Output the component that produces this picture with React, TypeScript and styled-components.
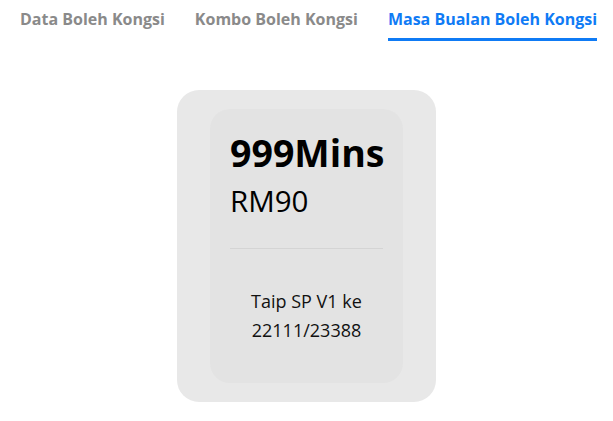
import React from "react";
import styled, { createGlobalStyle } from "styled-components";

const GlobalStyle = createGlobalStyle`
  body {
    margin: 0;
    background: #ffffff;
    font-family: "Open Sans", "Noto Sans", sans-serif;
  }
`;

const Page = styled.div`
  display: flex;
  flex-direction: column;
  align-items: stretch;
  width: 613px;
`;

const TabBar = styled.div`
  display: flex;
  padding-left: 5px;
`;

const Tab = styled.div<{ active?: boolean }>`
  margin: 0 15px;
  padding-top: 9px;
  height: 29px;
  font-size: 16px;
  line-height: 20px;
  font-weight: 700;
  white-space: nowrap;
  color: ${({ active }) => (active ? "#0f7bf5" : "#8a8a8a")};
  border-bottom: 3px solid ${({ active }) => (active ? "#0f7bf5" : "transparent")};
`;

const Content = styled.div`
  display: flex;
  justify-content: center;
  padding-top: 49px;
`;

const Card = styled.div`
  width: 259px;
  box-sizing: border-box;
  padding: 19px 33px;
  background: #e8e8e8;
  border-radius: 22px;
`;

const Inner = styled.div`
  background: #e3e3e3;
  border-radius: 20px;
  padding: 20px 20px 30px;
  height: 274px;
  box-sizing: border-box;
  display: flex;
  flex-direction: column;
`;

const Minutes = styled.div`
  font-size: 37.5px;
  font-weight: 700;
  line-height: 48px;
  color: #000;
`;

const Price = styled.div`
  font-size: 29.5px;
  line-height: 38px;
  margin-top: 5px;
  color: #000;
`;

const Divider = styled.hr`
  border: none;
  border-top: 1px solid #d4d4d4;
  margin: 28px 0 0;
`;

const Note = styled.div`
  margin-top: 38px;
  text-align: center;
  font-size: 18px;
  line-height: 29px;
  color: #111;
`;

const tabs = ["Data Boleh Kongsi", "Kombo Boleh Kongsi", "Masa Bualan Boleh Kongsi"];

const App: React.FC = () => {
  return (
    <Page>
      <GlobalStyle />
      <TabBar>
        {tabs.map((t, i) => (
          <Tab key={t} active={i === 2}>
            {t}
          </Tab>
        ))}
      </TabBar>
      <Content>
        <Card>
          <Inner>
            <Minutes>999Mins</Minutes>
            <Price>RM90</Price>
            <Divider />
            <Note>
              Taip SP V1 ke
              <br />
              22111/23388
            </Note>
          </Inner>
        </Card>
      </Content>
    </Page>
  );
};

export default App;
